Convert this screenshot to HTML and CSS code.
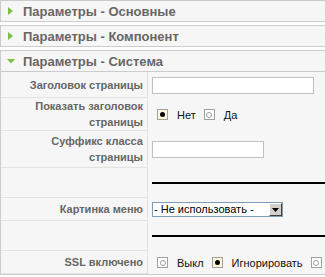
FILE: index.html
```html
<!DOCTYPE html>
<html>
<head>
<meta charset="utf-8">
<link rel="stylesheet" href="styles.css">
</head>
<body>
<div class="panel">
  <div class="title"><svg class="arrow" width="6" height="8" viewBox="0 0 6 8"><path d="M0 0 L5 4 L0 8 Z" fill="#7cc144"/></svg><span>Параметры - Основные</span></div>
</div>
<div class="panel">
  <div class="title"><svg class="arrow" width="6" height="8" viewBox="0 0 6 8"><path d="M0 0 L5 4 L0 8 Z" fill="#7cc144"/></svg><span>Параметры - Компонент</span></div>
</div>
<div class="panel">
  <div class="title open"><svg class="arrow down" width="8" height="5" viewBox="0 0 8 5"><path d="M0 0 L8 0 L4 4.5 Z" fill="#7cc144"/></svg><span>Параметры - Система</span></div>
  <div class="content">
    <div class="row r1">
      <div class="key">Заголовок страницы</div>
      <div class="val"><span class="input wide"></span></div>
    </div>
    <div class="row r2">
      <div class="key">Показать заголовок страницы</div>
      <div class="val radios">
        <span class="radio on"><i></i></span><span class="rlabel">Нет</span>
        <span class="radio"><i></i></span><span class="rlabel">Да</span>
      </div>
    </div>
    <div class="row r3">
      <div class="key">Суффикс класса страницы</div>
      <div class="val"><span class="input short"></span></div>
    </div>
    <div class="row r4">
      <div class="key"></div>
      <div class="val"><hr class="line"></div>
    </div>
    <div class="row r5">
      <div class="key">Картинка меню</div>
      <div class="val">
        <span class="select"><span class="stext">- Не использовать -</span><span class="sbtn"><svg width="7" height="4" viewBox="0 0 7 4"><path d="M0 0 L7 0 L3.5 4 Z" fill="#000"/></svg></span></span>
      </div>
    </div>
    <div class="row r6">
      <div class="key"></div>
      <div class="val"><hr class="line"></div>
    </div>
    <div class="row r7">
      <div class="key">SSL включено</div>
      <div class="val radios">
        <span class="radio"><i></i></span><span class="rlabel">Выкл</span>
        <span class="radio on"><i></i></span><span class="rlabel">Игнорировать</span>
        <span class="radio"><i></i></span>
      </div>
    </div>
  </div>
</div>
</body>
</html>
```

FILE: styles.css
```css
html, body {
  margin: 0;
  padding: 0;
  background: #ffffff;
  overflow: hidden;
}
body {
  font-family: "Liberation Sans", Arial, sans-serif;
  font-size: 11px;
  color: #333;
  width: 325px;
}
.panel {
  width: 340px;
  border: 1px solid #cccccc;
  background: #f6f6f6;
  margin-bottom: 3px;
}
.title {
  height: 20px;
  display: flex;
  align-items: center;
  padding-left: 7px;
  font-size: 13px;
  font-weight: bold;
  color: #666666;
}
.title .arrow {
  margin-right: 9px;
  flex: none;
}
.title .arrow.down {
  margin-left: -1px;
  margin-right: 8px;
}
.content {
  border-top: 1px solid #cccccc;
}
.row {
  display: grid;
  grid-template-columns: 147px 1fr;
}
.key {
  border-right: 1px solid #e3e3e3;
  border-bottom: 1px solid #e3e3e3;
  color: #666666;
  font-weight: bold;
  text-align: right;
  padding: 0 4px 0 20px;
  display: flex;
  align-items: center;
  justify-content: flex-end;
  line-height: 16px;
}
.val {
  display: flex;
  align-items: center;
  padding-left: 4px;
}
.val.radios {
  padding-left: 9px;
}
.r1 { height: 26px; }
.r2 { height: 33px; }
.r3 { height: 37px; }
.r4 { height: 30px; }
.r5 { height: 23px; }
.r6 { height: 30px; }
.r7 { height: 23px; }
.input {
  display: block;
  height: 15px;
  border: 1px solid #c0c0c0;
  background: #ffffff;
}
.input.wide { width: 160px; }
.input.short { width: 110px; }
.line {
  width: 100%;
  margin: 0;
  border: 0;
  height: 2px;
  background: #000;
}
.radio {
  flex: none;
  width: 9px;
  height: 9px;
  border: 1px solid #a0a0a0;
  background: #ffffff;
  display: flex;
  align-items: center;
  justify-content: center;
  margin-right: 9px;
}
.radio i {
  width: 4px;
  height: 4px;
  border: 1px solid #a0a0a0;
  border-radius: 50%;
}
.radio.on {
  background: #fff8d8;
}
.radio.on i {
  width: 5px;
  height: 5px;
  border: 0;
  background: #000;
}
.rlabel {
  margin-right: 8px;
  color: #111;
}
.select {
  display: flex;
  align-items: center;
  width: 129px;
  height: 13px;
  border: 1px solid #7f9db9;
  background: #ffffff;
}
.stext {
  flex: 1;
  color: #000;
  padding-left: 1px;
  font-size: 11px;
  line-height: 13px;
}
.sbtn {
  width: 11px;
  height: 11px;
  background: #d4d0c8;
  border: 1px solid;
  border-color: #ffffff #404040 #404040 #ffffff;
  display: flex;
  align-items: center;
  justify-content: center;
}
```
